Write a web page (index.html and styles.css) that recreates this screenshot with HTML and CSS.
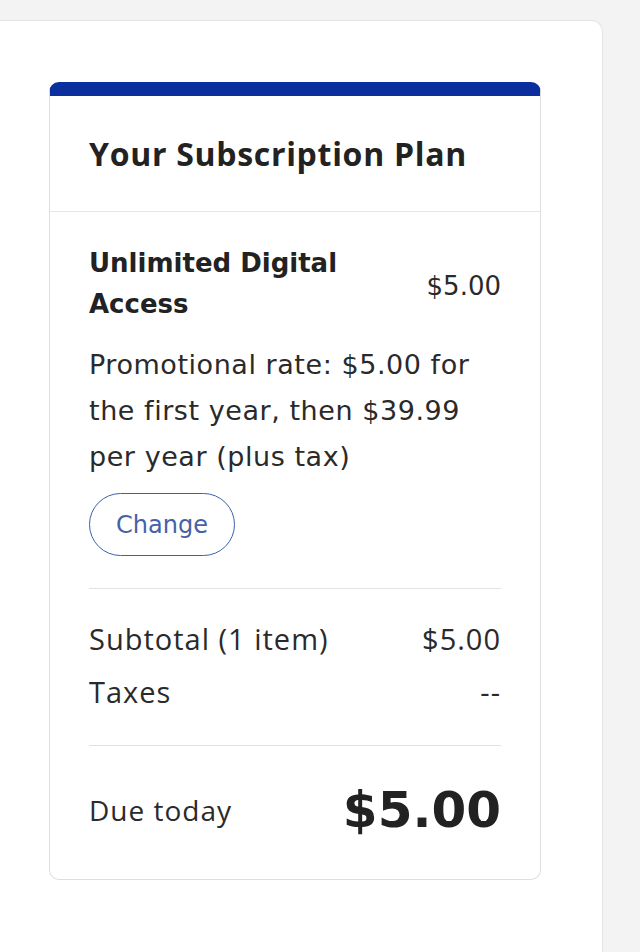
FILE: index.html
```html
<!DOCTYPE html>
<html lang="en">
<head>
<meta charset="utf-8">
<title>Your Subscription Plan</title>
<link rel="stylesheet" href="styles.css">
</head>
<body>
<div class="panel">
  <section class="card">
    <header class="card-head">
      <h2 class="card-title">Your Subscription Plan</h2>
    </header>
    <div class="card-body">
      <div class="item">
        <div class="item-row">
          <div class="item-name">Unlimited Digital Access</div>
          <div class="item-price">$5.00</div>
        </div>
        <p class="promo">Promotional rate: $5.00 for the first year, then $39.99 per year (plus tax)</p>
        <button class="change-btn" type="button">Change</button>
      </div>
      <div class="totals">
        <div class="total-row">
          <span>Subtotal (1 item)</span>
          <span>$5.00</span>
        </div>
        <div class="total-row">
          <span>Taxes</span>
          <span>--</span>
        </div>
      </div>
      <div class="due">
        <span class="due-label">Due today</span>
        <span class="due-amount">$5.00</span>
      </div>
    </div>
  </section>
</div>
</body>
</html>
```

FILE: styles.css
```css
* { box-sizing: border-box; }

html, body {
  margin: 0;
  padding: 0;
}

body {
  background: #f3f3f3;
  color: #2a2a2a;
  font-family: "Open Sans", "Liberation Sans", sans-serif;
}

.panel {
  margin-top: 20px;
  width: 603px;
  min-height: 932px;
  background: #ffffff;
  border-top: 1px solid #e4e4e4;
  border-right: 1px solid #e4e4e4;
  border-top-right-radius: 12px;
  padding: 61px 0 40px 49px;
}

.card {
  width: 492px;
  border: 1px solid #dedede;
  border-top: 14px solid #0b2f9c;
  border-radius: 10px;
  background: #ffffff;
}

.card-head {
  padding: 38px 39px 37px;
  border-bottom: 1px solid #e6e6e6;
}

.card-title {
  margin: 0;
  font-family: "Open Sans", sans-serif;
  font-weight: 700;
  font-size: 32px;
  line-height: 40px;
  letter-spacing: 0.7px;
  color: #222222;
}

.card-body {
  padding: 0 39px;
}

.item {
  padding: 31px 0 32px;
  border-bottom: 1px solid #e2e2e2;
}

.item-row {
  display: flex;
  align-items: center;
  justify-content: space-between;
  gap: 24px;
}

.item-name {
  font-family: "DejaVu Sans", sans-serif;
  font-weight: 700;
  font-size: 26px;
  line-height: 41px;
  color: #222222;
  max-width: 300px;
}

.item-price {
  font-family: "DejaVu Sans", sans-serif;
  font-size: 26px;
  line-height: 41px;
  color: #2a2a2a;
  padding-top: 4px;
}

.promo {
  margin: 17px 0 0;
  max-width: 400px;
  font-family: "DejaVu Sans", sans-serif;
  font-size: 27px;
  line-height: 46px;
  letter-spacing: 0.55px;
  color: #2a2a2a;
}

.change-btn {
  margin-top: 13px;
  width: 146px;
  height: 63px;
  border: 1.5px solid #3a62ab;
  border-radius: 32px;
  background: #ffffff;
  color: #4562a6;
  font-family: "DejaVu Sans", sans-serif;
  font-size: 24px;
  padding: 0;
}

.totals {
  display: flex;
  flex-direction: column;
  gap: 13px;
  padding: 30px 0 33px;
  border-bottom: 1px solid #e2e2e2;
}

.total-row {
  display: flex;
  justify-content: space-between;
  align-items: center;
  font-size: 29px;
  line-height: 40px;
  letter-spacing: 1px;
  color: #2a2a2a;
}

.due {
  display: flex;
  justify-content: space-between;
  align-items: center;
  padding: 34px 0 39px;
}

.due-label {
  font-size: 28px;
  line-height: 40px;
  letter-spacing: 1px;
  color: #2a2a2a;
}

.due-amount {
  font-family: "DejaVu Sans", sans-serif;
  font-weight: 700;
  font-size: 50px;
  line-height: 60px;
  color: #222222;
}
```
